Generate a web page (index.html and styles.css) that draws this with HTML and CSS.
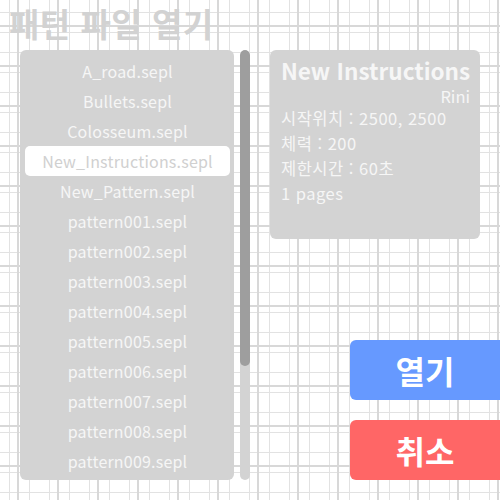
FILE: index.html
```html
<!DOCTYPE html>
<html lang="ko">

<head>
    <meta charset="UTF-8">
    <meta name="viewport" content="width=device-width, initial-scale=1.0">
    <title>패턴 파일 열기</title>
    <link rel="stylesheet" href="styles.css">
</head>

<body>
    <div class="screen">
        <!-- 제목 -->
        <h1 class="title">패턴 파일 열기</h1>

        <div class="main">
            <!-- 파일 목록 -->
            <div class="list-wrap">
                <ul class="file-list">
                    <li>A_road.sepl</li>
                    <li>Bullets.sepl</li>
                    <li>Colosseum.sepl</li>
                    <li class="selected">New_Instructions.sepl</li>
                    <li>New_Pattern.sepl</li>
                    <li>pattern001.sepl</li>
                    <li>pattern002.sepl</li>
                    <li>pattern003.sepl</li>
                    <li>pattern004.sepl</li>
                    <li>pattern005.sepl</li>
                    <li>pattern006.sepl</li>
                    <li>pattern007.sepl</li>
                    <li>pattern008.sepl</li>
                    <li>pattern009.sepl</li>
                </ul>
                <div class="scrollbar">
                    <div class="thumb"></div>
                </div>
            </div>

            <div class="side">
                <!-- 패턴 정보 -->
                <div class="info">
                    <div class="info-name">New Instructions</div>
                    <div class="info-author">Rini</div>
                    <div class="info-line">시작위치 : 2500, 2500</div>
                    <div class="info-line">체력 : 200</div>
                    <div class="info-line">제한시간 : 60초</div>
                    <div class="info-line">1 pages</div>
                </div>

                <!-- 버튼 -->
                <div class="buttons">
                    <button class="btn btn-open">열기</button>
                    <button class="btn btn-cancel">취소</button>
                </div>
            </div>
        </div>
    </div>
</body>

</html>
```

FILE: styles.css
```css
* {
    margin: 0;
    padding: 0;
    box-sizing: border-box;
}

:root {
    --panel: #d3d3d3;
    --text: #f6f6f6;
}

body {
    width: 500px;
    height: 500px;
    overflow: hidden;
    font-family: "Noto Sans CJK KR", "Noto Sans", sans-serif;
    background-color: #fff;
    /* 모눈 배경: 20px 간격 연한 선 + 40px 간격 진한 선 */
    background-image:
        linear-gradient(90deg, #d8d8d8 2px, transparent 2px),
        linear-gradient(180deg, #d8d8d8 2px, transparent 2px),
        linear-gradient(90deg, #e2e2e2 1px, transparent 1px),
        linear-gradient(180deg, #e2e2e2 1px, transparent 1px);
    background-size: 40px 40px, 40px 40px, 20px 20px, 20px 20px;
    background-position: 17px 0, 0 25px, 9px 0, 0 12px;
}

.screen {
    display: flex;
    flex-direction: column;
}

.title {
    height: 50px;
    padding-left: 9px;
    font-size: 33px;
    line-height: 46px;
    font-weight: bold;
    color: #d2d2d2;
    letter-spacing: 0.5px;
}

.main {
    display: flex;
    padding-left: 20px;
}

.list-wrap {
    display: flex;
    gap: 6px;
    height: 430px;
}

.file-list {
    list-style: none;
    width: 214px;
    height: 430px;
    overflow: hidden;
    padding: 6px 4px 0 5px;
    background: var(--panel);
    border-radius: 6px;
}

.file-list li {
    height: 30px;
    line-height: 30px;
    text-align: center;
    font-size: 16px;
    letter-spacing: 0.2px;
    color: var(--text);
    border-radius: 5px;
}

.file-list li.selected {
    background: #fff;
    color: #d0d0d0;
}

.scrollbar {
    width: 10px;
    height: 100%;
    background: var(--panel);
    border-radius: 5px;
    overflow: hidden;
}

.thumb {
    height: 316px;
    background: #9e9e9e;
    border-radius: 5px;
}

.side {
    display: flex;
    flex-direction: column;
    margin-left: 20px;
    width: 230px;
}

.info {
    width: 210px;
    height: 189px;
    padding: 4px 10px 0 11px;
    background: var(--panel);
    border-radius: 6px;
    color: var(--text);
}

.info-name {
    font-size: 22.5px;
    font-weight: bold;
    line-height: 32px;
    text-align: right;
    white-space: nowrap;
}

.info-author {
    font-size: 16.5px;
    line-height: 20px;
    text-align: right;
}

.info-line {
    font-size: 16.5px;
    line-height: 25px;
    letter-spacing: 0.5px;
}

.buttons {
    display: flex;
    flex-direction: column;
    gap: 20px;
    margin-top: 101px;
    margin-left: 80px;
}

.btn {
    width: 150px;
    height: 60px;
    border: none;
    border-radius: 6px 0 0 6px;
    font-family: inherit;
    font-size: 32px;
    font-weight: bold;
    color: #fff;
}

.btn-open {
    background: #6699ff;
}

.btn-cancel {
    background: #ff6666;
}
```
